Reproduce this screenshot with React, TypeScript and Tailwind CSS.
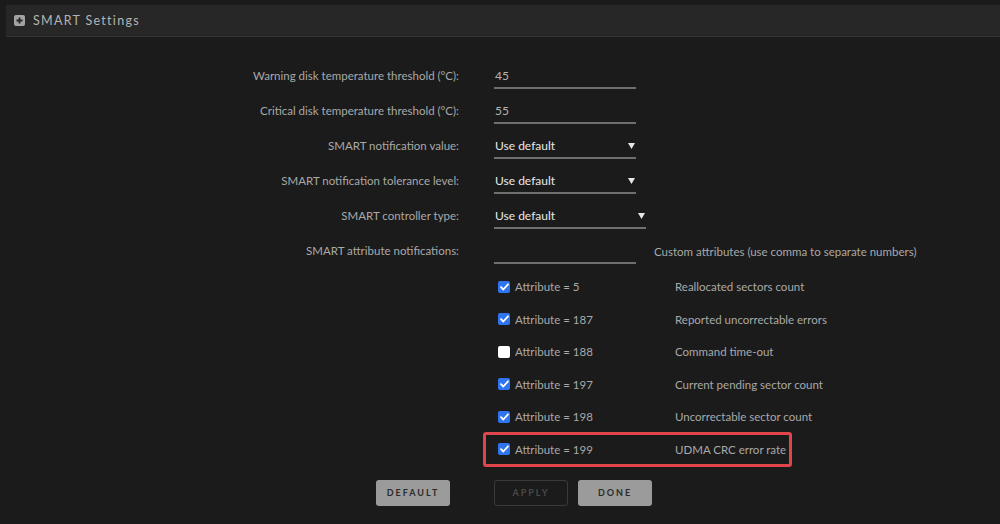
import React from "react";

const font = { fontFamily: "Lato, 'Open Sans', sans-serif" };

function Arrow() {
  return (
    <svg width="7" height="6" viewBox="0 0 7 6" className="shrink-0">
      <path d="M0 0h7L3.5 6z" fill="#e6e6e6" />
    </svg>
  );
}

function Field({ label, children }: { label: string; children: React.ReactNode }) {
  return (
    <div className="flex h-[35px] items-center">
      <div className="w-[460px] pr-[1px] text-right text-[11.5px] text-[#a9a9a9]">{label}</div>
      <div className="ml-[34px] flex items-center">{children}</div>
    </div>
  );
}

function TextInput({ value, width = "w-[142px]" }: { value: string; width?: string }) {
  return (
    <div className={`${width} flex h-[26px] items-center border-b-2 border-[#6f6f6f] pl-[1px] pt-[1px] text-[12px] text-[#b3b3b3]`}>
      {value}
    </div>
  );
}

function Select({ wide }: { wide?: boolean }) {
  return (
    <div
      className={`${wide ? "w-[152px]" : "w-[142px]"} flex h-[26px] items-center justify-between border-b-2 border-[#6f6f6f] pl-[1px] pr-[1px] pt-[1px] text-[12px] text-[#e8e8e8]`}
    >
      <span>Use default</span>
      <Arrow />
    </div>
  );
}

function Checkbox({ checked }: { checked: boolean }) {
  if (!checked) return <div className="h-[12px] w-[12px] rounded-[2px] bg-white" />;
  return (
    <div className="flex h-[12px] w-[12px] items-center justify-center rounded-[2px] bg-[#2f74f0]">
      <svg width="9" height="8" viewBox="0 0 9 8">
        <path d="M1 4.2l2.3 2.3L8 1.3" fill="none" stroke="#fff" strokeWidth="1.8" strokeLinecap="round" strokeLinejoin="round" />
      </svg>
    </div>
  );
}

const attrs = [
  { n: 5, desc: "Reallocated sectors count", on: true },
  { n: 187, desc: "Reported uncorrectable errors", on: true },
  { n: 188, desc: "Command time-out", on: false },
  { n: 197, desc: "Current pending sector count", on: true },
  { n: 198, desc: "Uncorrectable sector count", on: true },
  { n: 199, desc: "UDMA CRC error rate", on: true, mark: true },
];

export default function App() {
  return (
    <div className="h-[524px] w-[1000px] overflow-hidden bg-[#1b1b1b]" style={font}>
      {/* Header */}
      <div className="ml-[6px] mt-[5px] flex h-[32px] items-center border-b border-[#333] bg-[#272727]">
        <div className="ml-[8px] flex h-[11px] w-[11px] items-center justify-center rounded-[2px] bg-[#a3a3a3]">
          <svg width="7" height="7" viewBox="0 0 7 7">
            <path d="M3.5 0.5v6M0.5 3.5h6" stroke="#272727" strokeWidth="1.8" />
          </svg>
        </div>
        <span className="ml-[8px] mt-[2px] text-[12.5px] tracking-[1.3px] text-[#b4b4b4]">SMART Settings</span>
      </div>

      {/* Form */}
      <div className="mt-[21.5px]">
        <Field label="Warning disk temperature threshold (°C):">
          <TextInput value="45" />
        </Field>
        <Field label="Critical disk temperature threshold (°C):">
          <TextInput value="55" />
        </Field>
        <Field label="SMART notification value:">
          <Select />
        </Field>
        <Field label="SMART notification tolerance level:">
          <Select />
        </Field>
        <Field label="SMART controller type:">
          <Select wide />
        </Field>
        <Field label="SMART attribute notifications:">
          <TextInput value="" />
          <span className="ml-[18px] mt-[2px] text-[11.5px] text-[#a9a9a9]">
            Custom attributes (use comma to separate numbers)
          </span>
        </Field>

        <div className="ml-[494px] mt-[2px]">
          {attrs.map((a) => (
            <div key={a.n} className="relative flex h-[32.5px] items-center text-[11.5px] text-[#a9a9a9]">
              {a.mark && (
                <div className="absolute -top-[1.5px] -bottom-[1px] -left-[11px] w-[309px] rounded-[3px] border-[3px] border-[#e0454b]" />
              )}
              <div className="ml-[4px]">
                <Checkbox checked={a.on} />
              </div>
              <span className="ml-[5px] w-[160px]">Attribute = {a.n}</span>
              <span>{a.desc}</span>
            </div>
          ))}
        </div>

        {/* Buttons */}
        <div className="mt-[14px] flex">
          <div className="flex w-[460px] justify-end pr-[10px]">
            <button className="h-[26px] w-[74px] rounded-[3px] bg-[#9b9b9b] text-[9px] font-bold tracking-[2px] text-[#2b2b2b]">
              DEFAULT
            </button>
          </div>
          <button className="ml-[34px] h-[26px] w-[74px] rounded-[3px] border-[1.5px] border-[#3a3a3a] text-[9px] font-bold tracking-[2px] text-[#4a4a4a]">
            APPLY
          </button>
          <button className="ml-[10px] h-[26px] w-[74px] rounded-[3px] bg-[#9b9b9b] text-[9px] font-bold tracking-[2px] text-[#2b2b2b]">
            DONE
          </button>
        </div>
      </div>
    </div>
  );
}
